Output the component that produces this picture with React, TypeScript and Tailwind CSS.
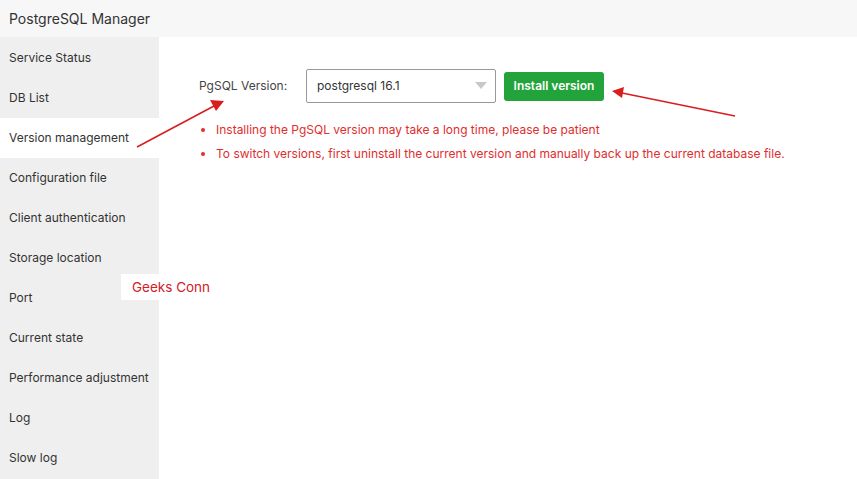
const menu = [
  "Service Status",
  "DB List",
  "Version management",
  "Configuration file",
  "Client authentication",
  "Storage location",
  "Port",
  "Current state",
  "Performance adjustment",
  "Log",
  "Slow log",
];

const App = () => {
  return (
    <div className="relative w-[857px] h-[479px] overflow-hidden bg-white text-[#333] font-['Inter','Noto_Sans',sans-serif]">
      <div className="h-[37px] bg-[#f7f7f7] flex items-center px-[9px] text-[14px] text-[#333]">
        PostgreSQL Manager
      </div>

      <div className="flex h-[442px]">
        <div className="w-[159px] shrink-0 bg-[#efefef] pt-[1px]">
          {menu.map((m) => (
            <div
              key={m}
              className={
                "h-[40px] flex items-center px-[9px] text-[12px] whitespace-nowrap " +
                (m === "Version management" ? "bg-white" : "")
              }
            >
              {m}
            </div>
          ))}
        </div>

        <div className="flex-1 pl-[40px] pt-[32px]">
          <div className="flex items-center">
            <span className="text-[12px] text-[#444] w-[107px]">PgSQL Version:</span>
            <div className="w-[190px] h-[34px] border border-[#999] rounded-[2px] flex items-center justify-between pl-[10px] pr-[8px] text-[12px]">
              <span>postgresql 16.1</span>
              <svg width="12" height="8" viewBox="0 0 12 8">
                <path d="M0 0 L12 0 L6 7 Z" fill="#c8c8c8" />
              </svg>
            </div>
            <button className="ml-[8px] w-[100px] h-[29px] rounded-[3px] bg-[#22a33b] text-white text-[12px] font-semibold">
              Install version
            </button>
          </div>

          <ul className="mt-[15px] text-[12px] text-[#e02d2d]">
            <li className="flex items-center h-[24px]">
              <span className="w-[4px] h-[4px] rounded-full bg-[#e02d2d] ml-[2px] mr-[11px]" />
              Installing the PgSQL version may take a long time, please be patient
            </li>
            <li className="flex items-center h-[24px]">
              <span className="w-[4px] h-[4px] rounded-full bg-[#e02d2d] ml-[2px] mr-[11px]" />
              To switch versions, first uninstall the current version and manually back up the current database file.
            </li>
          </ul>
        </div>
      </div>

      <div className="absolute left-[121px] top-[274px] h-[26px] w-[100px] bg-white flex items-center pl-[11px] text-[13.5px] text-[#d0202a]">
        Geeks Conn
      </div>

      <svg className="absolute left-0 top-0 pointer-events-none" width="857" height="479">
        <line x1="137" y1="147" x2="214" y2="106" stroke="#d81e1e" strokeWidth="1.6" />
        <path d="M224 101 L210 100 L216 111 Z" fill="#d81e1e" />
        <line x1="735" y1="116" x2="622" y2="93" stroke="#d81e1e" strokeWidth="1.6" />
        <path d="M612 91 L624 87 L622 98 Z" fill="#d81e1e" />
      </svg>
    </div>
  );
};

export default App;
